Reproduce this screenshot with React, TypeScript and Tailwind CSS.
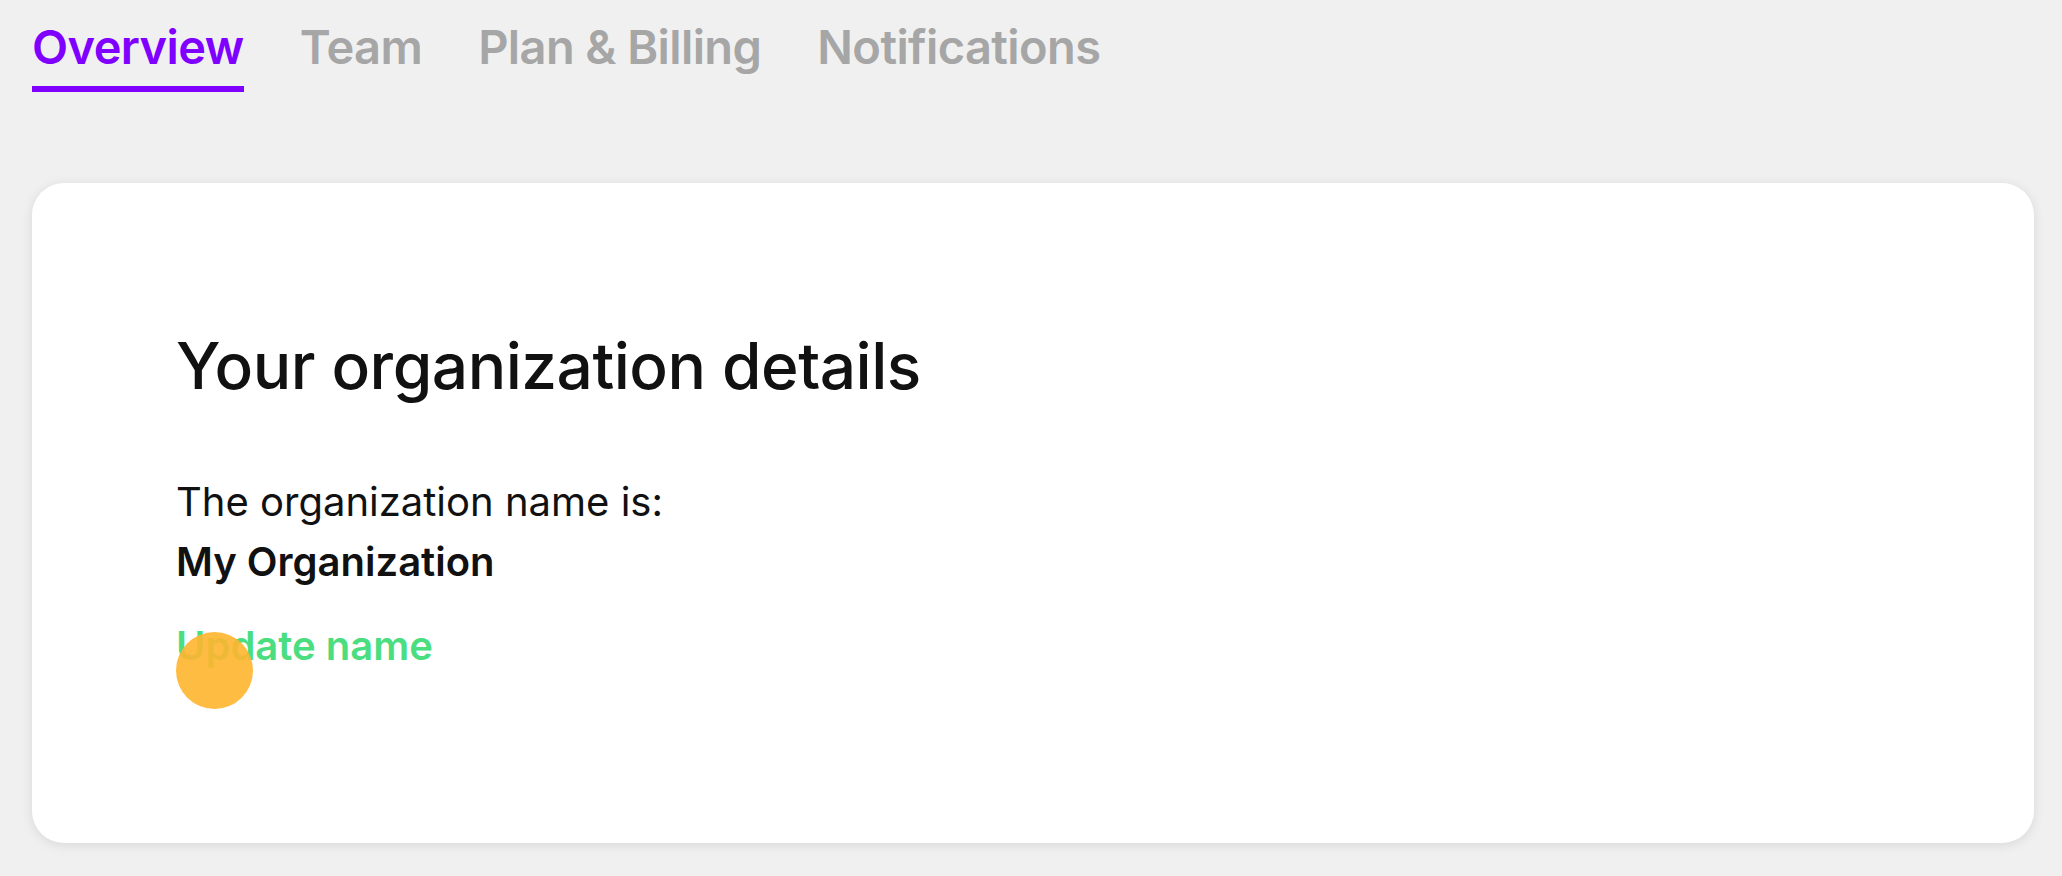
import React from "react";

export default function App() {
  const tabs = ["Overview", "Team", "Plan & Billing", "Notifications"];
  return (
    <div
      className="min-h-[876px] w-full bg-[#f0f0f0] pl-[32px] pr-[28px]"
      style={{ fontFamily: "Inter, 'Noto Sans', sans-serif" }}
    >
      <nav className="flex gap-[56px] pt-[18px]">
        {tabs.map((t, i) => (
          <div key={t} className="flex flex-col">
            <span
              className={
                "text-[47px] leading-[58px] font-semibold tracking-[-0.6px] " +
                (i === 0 ? "text-[#7f00ff]" : "text-[#a6a6a6]")
              }
            >
              {t}
            </span>
            <span
              className={
                "mt-[10px] h-[6px] w-full " + (i === 0 ? "bg-[#7f00ff]" : "bg-transparent")
              }
            />
          </div>
        ))}
      </nav>

      <section className="mt-[91px] h-[660px] rounded-[32px] bg-white pl-[144px] pt-[143px] shadow-[0_2px_12px_rgba(0,0,0,0.10)]">
        <h1 className="text-[64px] leading-[80px] font-medium tracking-[-0.5px] text-[#111111]">
          Your organization details
        </h1>
        <div className="mt-[66px] text-[40px] leading-[60px] text-[#111111]">
          <p>The organization name is:</p>
          <p className="font-semibold">My Organization</p>
        </div>
        <div className="relative mt-[24px] inline-block">
          <a className="text-[40px] leading-[60px] font-semibold text-[#4ade80]">Update name</a>
          <span className="absolute left-0 top-[16px] h-[77px] w-[77px] rounded-full bg-[#ffb52e]/90" />
        </div>
      </section>
    </div>
  );
}
